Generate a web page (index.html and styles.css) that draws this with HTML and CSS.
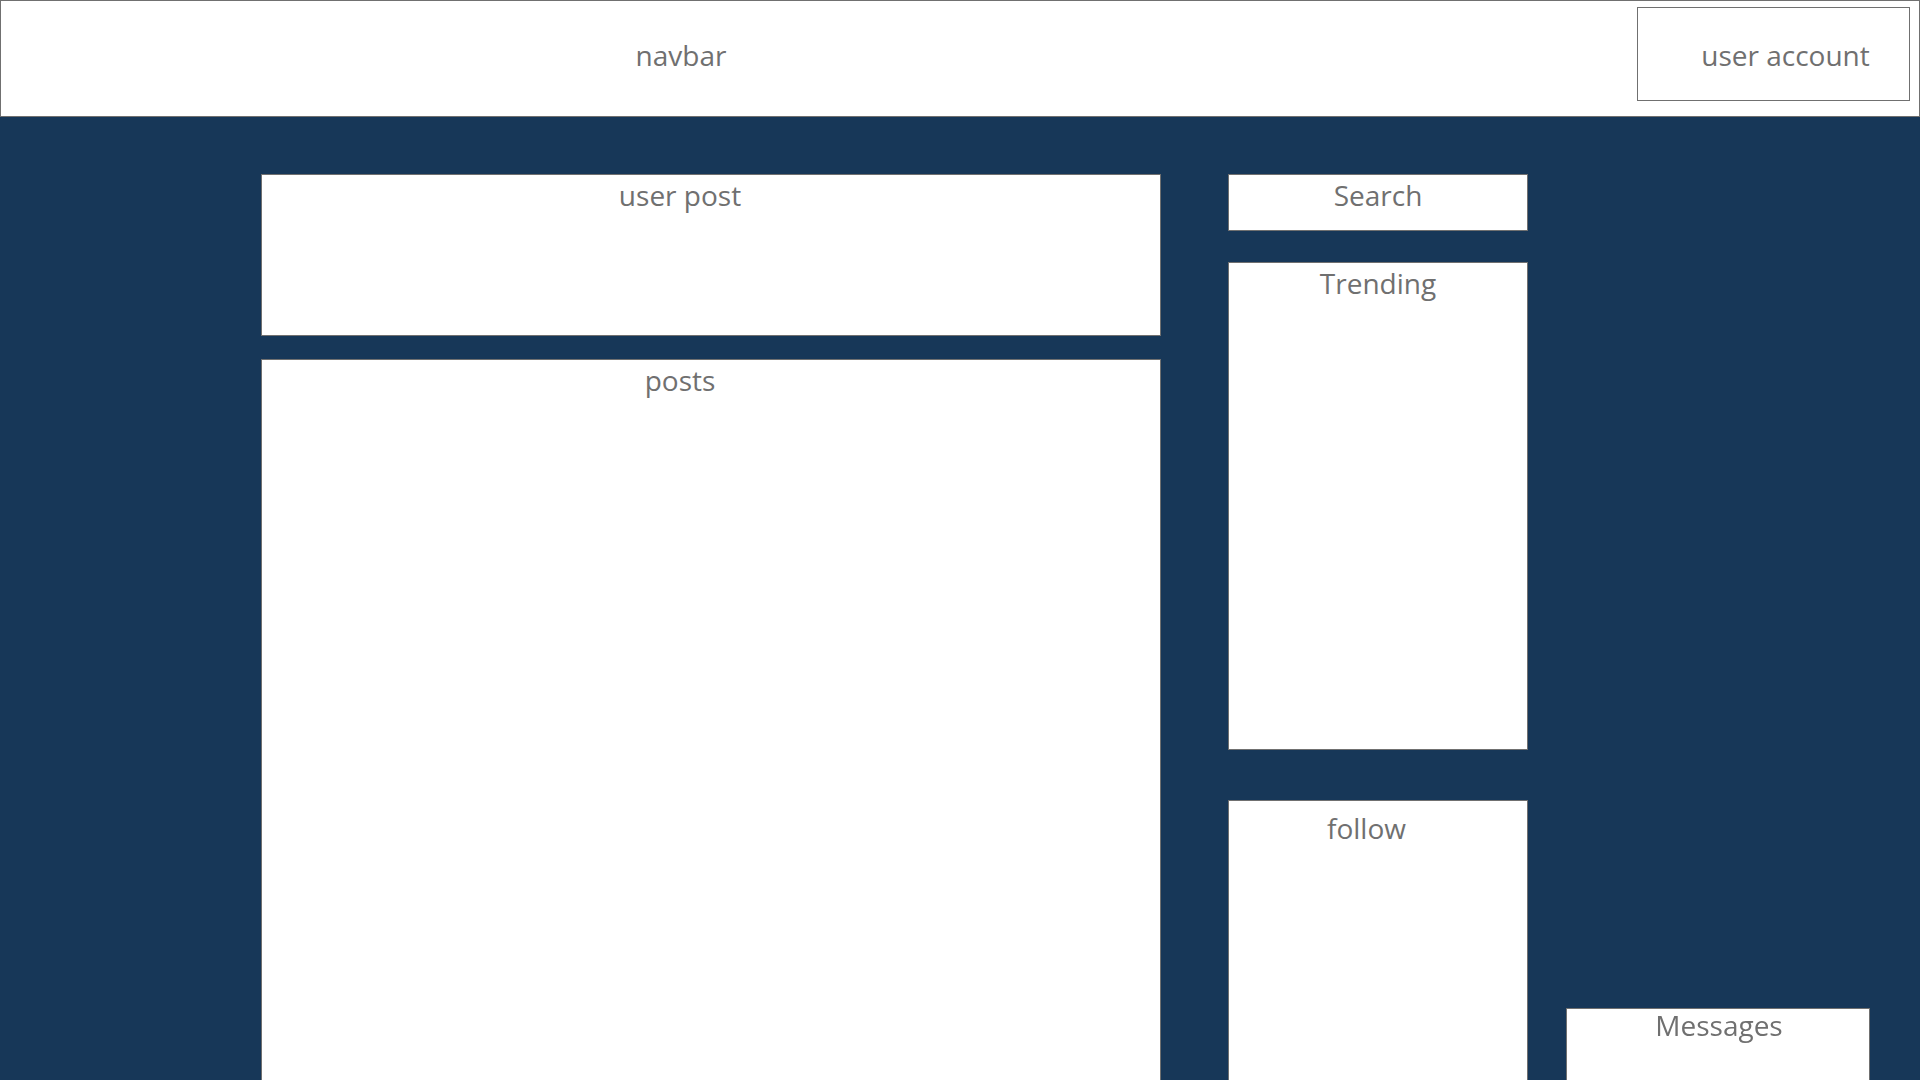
FILE: index.html
```html
<!DOCTYPE html>
<html lang="en">
<head>
<meta charset="utf-8">
<title>Layout</title>
<link rel="stylesheet" href="styles.css">
</head>
<body>
<header class="navbar">
  <div class="navbar-title">navbar</div>
  <div class="account">user account</div>
</header>
<main class="main">
  <section class="col-left">
    <div class="box box-userpost"><h2 class="label label-left">user post</h2></div>
    <div class="box box-posts"><h2 class="label label-left">posts</h2></div>
  </section>
  <aside class="col-right">
    <div class="box box-search"><h2 class="label">Search</h2></div>
    <div class="box box-trending"><h2 class="label">Trending</h2></div>
    <div class="box box-follow"><h2 class="label label-follow">follow</h2></div>
  </aside>
</main>
<div class="messages"><h2 class="label label-msg">Messages</h2></div>
</body>
</html>
```
FILE: styles.css
```css
* { box-sizing: border-box; }
html, body {
  margin: 0;
  padding: 0;
  height: 1080px;
  overflow: hidden;
  background: #173758;
  font-family: "Open Sans", "Noto Sans", sans-serif;
}
.navbar {
  height: 117px;
  background: #ffffff;
  border: 1px solid #707070;
  display: flex;
  align-items: flex-start;
}
.navbar-title {
  margin-left: 261px;
  width: 900px;
  padding-right: 62px;
  text-align: center;
  font-size: 28px;
  color: #707070;
  line-height: 38px;
  margin-top: 35px;
}
.account {
  margin-left: auto;
  margin-top: 6px;
  margin-right: 9px;
  width: 273px;
  height: 94px;
  border: 1px solid #707070;
  padding-left: 24px;
  text-align: center;
  font-size: 28px;
  color: #707070;
  line-height: 38px;
  padding-top: 28px;
}
.main {
  display: grid;
  grid-template-columns: 900px 300px;
  column-gap: 67px;
  padding-left: 261px;
  padding-top: 57px;
}
.col-left, .col-right {
  display: flex;
  flex-direction: column;
}
.col-left { gap: 23px; }
.box {
  background: #ffffff;
  border: 1px solid #707070;
}
.label {
  margin: 0;
  padding-top: 1px;
  font-size: 28px;
  font-weight: 400;
  line-height: 38px;
  color: #707070;
  text-align: center;
}
.label-left { padding-right: 62px; }
.label-follow { padding-top: 8px; padding-right: 23px; }
.label-msg { padding-top: 0; margin-top: -3px; padding-left: 2px; }
.box-userpost { height: 162px; }
.box-posts { height: 730px; }
.box-search { height: 57px; }
.box-trending { height: 488px; margin-top: 31px; }
.box-follow { height: 290px; margin-top: 50px; }
.messages {
  position: fixed;
  left: 1566px;
  top: 1008px;
  width: 304px;
  height: 80px;
  background: #ffffff;
  border: 1px solid #707070;
}
```
